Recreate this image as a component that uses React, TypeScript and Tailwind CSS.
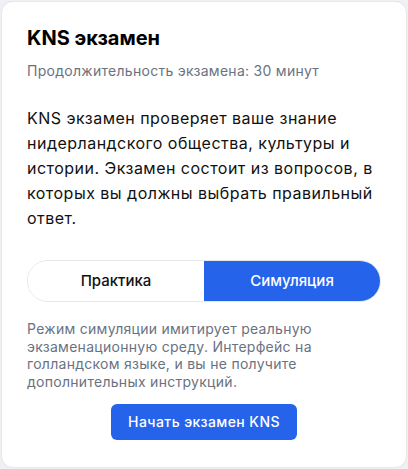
import React, { useState } from "react";

export default function App() {
  const [mode, setMode] = useState<"practice" | "simulation">("simulation");

  return (
    <div
      className="min-h-[469px] w-[408px] bg-[#eef0f4] p-px"
      style={{ fontFamily: "Inter, 'Noto Sans', sans-serif" }}
    >
      <div className="flex h-[467px] flex-col rounded-xl border border-[#e5e7eb] bg-white px-[25px] pt-[22px]">
        <h1 className="text-[20px] font-bold leading-7 text-black">KNS экзамен</h1>
        <p className="mt-[9px] text-sm leading-5 tracking-[0.02em] text-gray-500">
          Продолжительность экзамена: 30 минут
        </p>

        <p className="mt-[25px] text-base leading-[25px] tracking-[0.03em] text-[#111111]">
          KNS экзамен проверяет ваше знание нидерландского общества, культуры и истории.
          Экзамен состоит из вопросов, в которых вы должны выбрать правильный ответ.
        </p>

        <div className="mt-[29px] flex h-[42px] w-full overflow-hidden rounded-full border border-gray-200">
          <button
            onClick={() => setMode("practice")}
            className={
              mode === "practice"
                ? "flex-1 bg-[#2563eb] text-[15px] font-medium text-white"
                : "flex-1 bg-white text-[15px] font-medium text-[#111111]"
            }
          >
            Практика
          </button>
          <button
            onClick={() => setMode("simulation")}
            className={
              mode === "simulation"
                ? "flex-1 bg-[#2563eb] text-[15px] font-medium text-white"
                : "flex-1 bg-white text-[15px] font-medium text-[#111111]"
            }
          >
            Симуляция
          </button>
        </div>

        <p className="mt-[18px] text-sm leading-[17.5px] tracking-[0.02em] text-gray-500">
          Режим симуляции имитирует реальную экзаменационную среду. Интерфейс на
          голландском языке, и вы не получите дополнительных инструкций.
        </p>

        <div className="mt-[14px] flex justify-center">
          <button className="h-[36px] rounded-md bg-[#2563eb] px-[17px] text-sm font-medium tracking-[0.03em] text-white">
            Начать экзамен KNS
          </button>
        </div>
      </div>
    </div>
  );
}
